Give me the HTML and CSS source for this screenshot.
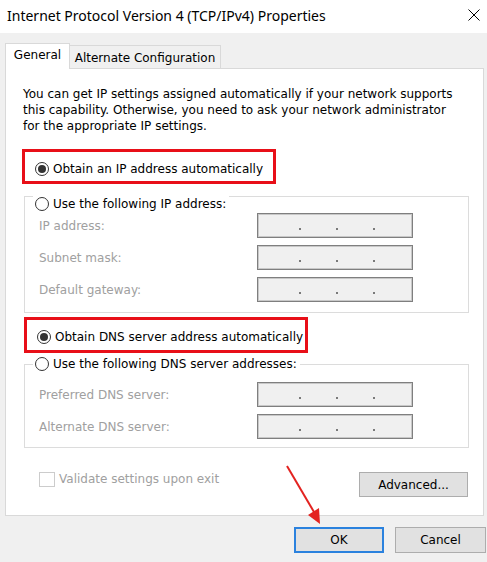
FILE: index.html
```html
<!DOCTYPE html>
<html lang="en">
<head>
    <meta charset="UTF-8">
    <title>Internet Protocol Version 4 (TCP/IPv4) Properties</title>
    <link rel="stylesheet" href="styles.css">
</head>
<body>
<div class="window">
    <div class="titlebar">
        <span class="title">Internet Protocol Version 4 (TCP/IPv4) Properties</span>
        <svg class="close" viewBox="0 0 12 12"><path d="M0.5 0.5L11.5 11.5M11.5 0.5L0.5 11.5" stroke="#000" stroke-width="1"/></svg>
    </div>

    <div class="dialog">
        <div class="tabs">
            <div class="tab active">General</div>
            <div class="tab">Alternate Configuration</div>
        </div>

        <div class="panel">
            <p class="intro">You can get IP settings assigned automatically if your network supports<br>this capability. Otherwise, you need to ask your network administrator<br>for the appropriate IP settings.</p>

            <div class="mark mark-ip">
                <div class="radio"><span class="radio-btn on"></span>Obtain an IP address automatically</div>
            </div>

            <div class="group group-ip">
                <div class="legend">
                    <div class="radio"><span class="radio-btn"></span>Use the following IP address:</div>
                </div>
                <div class="field">
                    <span class="label">IP address:</span>
                    <span class="ipbox"><i></i><b></b><i></i><b></b><i></i><b></b><i></i></span>
                </div>
                <div class="field">
                    <span class="label">Subnet mask:</span>
                    <span class="ipbox"><i></i><b></b><i></i><b></b><i></i><b></b><i></i></span>
                </div>
                <div class="field">
                    <span class="label">Default gateway:</span>
                    <span class="ipbox"><i></i><b></b><i></i><b></b><i></i><b></b><i></i></span>
                </div>
            </div>

            <div class="mark mark-dns">
                <div class="radio"><span class="radio-btn on"></span>Obtain DNS server address automatically</div>
            </div>

            <div class="group group-dns">
                <div class="legend">
                    <div class="radio"><span class="radio-btn"></span>Use the following DNS server addresses:</div>
                </div>
                <div class="field">
                    <span class="label">Preferred DNS server:</span>
                    <span class="ipbox"><i></i><b></b><i></i><b></b><i></i><b></b><i></i></span>
                </div>
                <div class="field">
                    <span class="label">Alternate DNS server:</span>
                    <span class="ipbox"><i></i><b></b><i></i><b></b><i></i><b></b><i></i></span>
                </div>
            </div>

            <div class="bottom">
                <div class="check"><span class="check-box"></span>Validate settings upon exit</div>
                <button class="btn btn-adv">Advanced...</button>
            </div>
        </div>

        <div class="footer">
            <button class="btn btn-ok">OK</button>
            <button class="btn btn-cancel">Cancel</button>
        </div>
    </div>

    <!-- annotation arrow pointing at OK -->
    <svg class="arrow" viewBox="0 0 487 562">
        <line x1="287" y1="466" x2="314" y2="512" stroke="#e32320" stroke-width="2"/>
        <polygon points="320,524 319,508 308,515" fill="#e32320"/>
    </svg>
</div>
</body>
</html>
```

FILE: styles.css
```css
body {
    margin: 0;
    background: #f0f0f0;
    font-family: "DejaVu Sans", Tahoma, sans-serif;
    font-size: 12px;
    color: #000;
}
.window {
    position: relative;
    width: 487px;
    height: 562px;
    overflow: hidden;
}
.titlebar {
    height: 33px;
    box-sizing: border-box;
    padding: 0 7px 3px 7px;
    background: #fff;
    display: flex;
    align-items: center;
    justify-content: space-between;
}
.title {
    font-family: "Noto Sans", sans-serif;
    font-size: 14px;
}
.close {
    width: 12px;
    height: 12px;
}
.dialog {
    padding: 10px 1px 0 5px;
}
.tabs {
    display: flex;
    align-items: flex-start;
    height: 25px;
}
.tab {
    box-sizing: border-box;
    border: 1px solid #d9d9d9;
    border-bottom: none;
    line-height: 16px;
    text-align: center;
}
.tab.active {
    position: relative; /* sits over the panel's top border */
    width: 65px;
    height: 26px;
    padding-top: 3px;
    background: #fff;
}
.tab:not(.active) {
    width: 151px;
    height: 23px;
    margin-top: 2px;
    padding-top: 4px;
    border-left: none;
    background: #f0f0f0;
}
.panel {
    box-sizing: border-box;
    height: 448px;
    margin-right: 2px;
    padding: 17px 14px 0 16px;
    background: #fff;
    border: 1px solid #d9d9d9;
}
.intro {
    margin: 0 0 0 1px;
    line-height: 16px;
}
.mark {
    width: fit-content;
    border: 3px solid #e80f18;
}
.mark-ip {
    margin-top: 15px;
    padding: 9px 10px 4px 10px;
}
.mark-dns {
    margin: 4px 0 0 2px;
    padding: 9px 2px 5px 10px;
}
.radio {
    display: flex;
    align-items: center;
    gap: 4px;
    line-height: 16px;
}
.radio-btn {
    box-sizing: border-box;
    width: 14px;
    height: 14px;
    border: 1px solid #333;
    border-radius: 50%;
    background: #fff;
    display: flex;
    align-items: center;
    justify-content: center;
}
.radio-btn.on::after {
    content: "";
    width: 8px;
    height: 8px;
    border-radius: 50%;
    background: #333;
}
.group {
    margin-left: 2px;
    padding-left: 14px;
    border: 1px solid #dcdcdc;
}
.legend {
    width: fit-content;
    padding: 0 3px 0 2px;
    background: #fff;
}
.group-ip {
    margin-top: 12px;
    padding-bottom: 10px;
}
.group-ip .legend {
    margin: -1px 0 1px -6px;
}
.group-dns {
    margin-top: 11px;
    padding-bottom: 8px;
}
.group-dns .legend {
    margin: -9px 0 10px -6px;
}
.field {
    display: flex;
    align-items: center;
    height: 25px;
}
.field + .field {
    margin-top: 7px;
}
.label {
    width: 218px;
    color: #a0a0a0;
}
.ipbox {
    box-sizing: border-box;
    width: 156px;
    height: 25px;
    padding: 0 2px 7px 6px;
    border: 1px solid #7f7f7f;
    box-shadow: inset 0 0 0 1px #c8c8c8;
    background: #f0f0f0;
    display: flex;
    align-items: flex-end;
}
.ipbox i {
    flex: 1;
}
.ipbox b {
    width: 2px;
    height: 2px;
    background: #7a7a7a;
}
.bottom {
    display: flex;
    justify-content: space-between;
    align-items: flex-start;
    margin-top: 23px;
    padding-left: 17px;
}
.check {
    display: flex;
    align-items: center;
    gap: 4px;
    line-height: 16px;
    color: #a0a0a0;
}
.check-box {
    box-sizing: border-box;
    width: 16px;
    height: 15px;
    border: 1px solid #cccccc;
    background: #fff;
}
.btn {
    box-sizing: border-box;
    padding: 0;
    font: inherit;
    color: #000;
    background: #e1e1e1;
    border: 1px solid #adadad;
}
.btn-adv {
    width: 109px;
    height: 25px;
    margin: 1px 1px 0 0;
}
.footer {
    display: flex;
    justify-content: flex-end;
    gap: 11px;
    margin-top: 11px;
}
.btn-ok {
    width: 90px;
    height: 26px;
    border: 2px solid #2b82de;
}
.btn-cancel {
    width: 91px;
    height: 26px;
}
.arrow {
    position: absolute;
    left: 0;
    top: 0;
    width: 487px;
    height: 562px;
    pointer-events: none;
}
```
